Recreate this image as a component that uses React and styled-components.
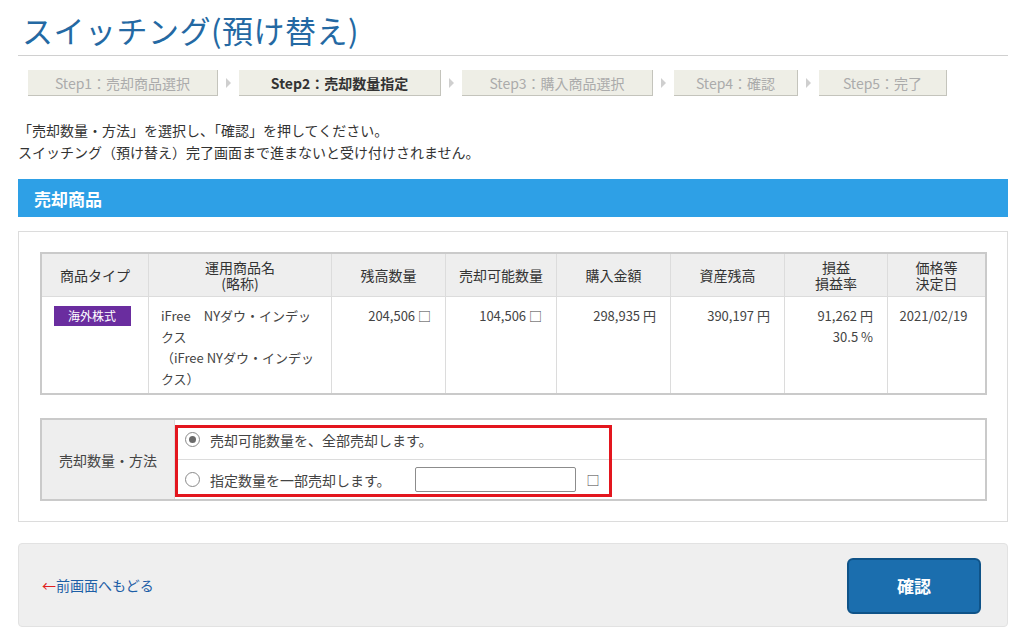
import React from "react";
import styled, { createGlobalStyle } from "styled-components";

const GlobalStyle = createGlobalStyle`
  body {
    margin: 0;
    background: #fff;
    font-family: "Noto Sans CJK JP", "Liberation Sans", sans-serif;
    color: #333;
  }
`;

const Page = styled.div`
  width: 990px;
  padding: 0 24px 0 18px;
`;

const Title = styled.h1`
  margin: 0;
  padding: 8px 0 0 4px;
  height: 47px;
  font-size: 31px;
  font-weight: 400;
  line-height: 44px;
  color: #2469a3;
  border-bottom: 1px solid #d0d0d0;
  letter-spacing: 0.5px;
`;

const Steps = styled.div`
  display: flex;
  align-items: center;
  padding: 14px 0 0 10px;
  height: 26px;
`;

const Step = styled.div`
  box-sizing: border-box;
  width: ${(p) => p.$w}px;
  height: 26px;
  display: flex;
  align-items: center;
  justify-content: center;
  background: #eeeee6;
  border-right: 1px solid #c4c4bc;
  border-bottom: 1px solid #c4c4bc;
  font-size: 14px;
  color: ${(p) => (p.$active ? "#333" : "#ababab")};
  font-weight: ${(p) => (p.$active ? 700 : 400)};
`;

const Arrow = styled.div`
  width: 21px;
  display: flex;
  justify-content: center;
  &::before {
    content: "";
    border-left: 5px solid #cfcfcf;
    border-top: 5px solid transparent;
    border-bottom: 5px solid transparent;
  }
`;

const Lead = styled.p`
  margin: 0;
  padding-top: 23px;
  font-size: 14px;
  line-height: 22px;
  color: #333;
`;

const SectionBar = styled.div`
  margin-top: 16px;
  height: 38px;
  background: #2ea0e6;
  color: #fff;
  font-size: 17px;
  font-weight: 700;
  display: flex;
  align-items: center;
  padding-left: 16px;
`;

const Panel = styled.div`
  margin-top: 14px;
  border: 1px solid #dcdcdc;
  padding: 20px 20px 20px 21px;
  display: flex;
  flex-direction: column;
  gap: 23px;
`;

const Table = styled.table`
  width: 947px;
  border-collapse: collapse;
  border: 2px solid #cacaca;
  font-size: 14px;
`;

const Th = styled.th`
  background: #eeeeee;
  border: 1px solid #dcdcdc;
  font-weight: 400;
  height: 42px;
  padding: 0;
  line-height: 16px;
  color: #333;
  width: ${(p) => p.$w}px;
`;

const Td = styled.td`
  border: 1px solid #dcdcdc;
  vertical-align: top;
  height: 88px;
  padding: 8px 14px 0 ${(p) => (p.$left ? 12 : 8)}px;
  text-align: ${(p) => p.$align || "right"};
  line-height: 21px;
  font-size: 13px;
  color: #444;
`;

const Badge = styled.span`
  display: inline-block;
  width: 77px;
  height: 20px;
  line-height: 20px;
  background: #6a2d9f;
  color: #fff;
  font-size: 12px;
  text-align: center;
  margin-top: 1px;
`;

const Method = styled.table`
  width: 947px;
  border-collapse: collapse;
  border: 2px solid #cacaca;
  font-size: 14px;
`;

const Label = styled.td`
  width: 132px;
  background: #eeeeee;
  border: 1px solid #dcdcdc;
  text-align: center;
  color: #444;
  padding: 0;
`;

const Options = styled.td`
  padding: 0;
  border: 1px solid #dcdcdc;
`;

const OptionsWrap = styled.div`
  position: relative;
`;

const OptionRow = styled.label`
  display: flex;
  align-items: center;
  height: 39px;
  padding-left: 10px;
  gap: 10px;
  color: #444;
  font-size: 14px;
  & + & {
    border-top: 1px solid #dcdcdc;
  }
`;

const Radio = styled.span`
  box-sizing: border-box;
  width: 15px;
  height: 15px;
  border-radius: 50%;
  border: 1px solid #8a8a8a;
  background: #fff;
  display: flex;
  align-items: center;
  justify-content: center;
  &::after {
    content: "";
    width: 7px;
    height: 7px;
    border-radius: 50%;
    background: ${(p) => (p.$checked ? "#6a6a6a" : "transparent")};
  }
`;

const QtyInput = styled.input`
  box-sizing: border-box;
  width: 161px;
  height: 25px;
  margin-left: 14px;
  border: 1px solid #8c8c8c;
  border-radius: 2px;
`;

const Unit = styled.span`
  margin-left: 1px;
  font-size: 13px;
`;

const Highlight = styled.div`
  position: absolute;
  left: 0;
  top: 5px;
  width: 437px;
  height: 72px;
  box-sizing: border-box;
  border: 3px solid #e3161e;
  pointer-events: none;
`;

const Footer = styled.div`
  margin-top: 21px;
  height: 84px;
  box-sizing: border-box;
  background: #efefef;
  border: 1px solid #e2e2e2;
  border-radius: 4px;
  display: flex;
  align-items: center;
  justify-content: space-between;
  padding: 0 26px 0 23px;
`;

const BackLink = styled.a`
  font-size: 14px;
  color: #1d5ea6;
  text-decoration: none;
  span {
    color: #e02020;
  }
`;

const Confirm = styled.button`
  width: 134px;
  height: 56px;
  background: #1b6eae;
  border: 2px solid #0f5388;
  border-radius: 6px;
  color: #fff;
  font-family: inherit;
  font-size: 17px;
  font-weight: 700;
  margin-top: 1px;
`;

const steps = [
  { label: "Step1：売却商品選択", w: 190 },
  { label: "Step2：売却数量指定", w: 202, active: true },
  { label: "Step3：購入商品選択", w: 191 },
  { label: "Step4：確認", w: 124 },
  { label: "Step5：完了", w: 128 },
];

export default function App() {
  return (
    <>
      <GlobalStyle />
      <Page>
        <Title>スイッチング(預け替え)</Title>
        <Steps>
          {steps.map((s, i) => (
            <React.Fragment key={s.label}>
              {i > 0 && <Arrow />}
              <Step $w={s.w} $active={s.active}>
                {s.label}
              </Step>
            </React.Fragment>
          ))}
        </Steps>
        <Lead>
          「売却数量・方法」を選択し、「確認」を押してください。
          <br />
          スイッチング（預け替え）完了画面まで進まないと受け付けされません。
        </Lead>
        <SectionBar>売却商品</SectionBar>
        <Panel>
          <Table>
            <thead>
              <tr>
                <Th $w={106}>商品タイプ</Th>
                <Th $w={182}>
                  運用商品名
                  <br />
                  (略称)
                </Th>
                <Th $w={113}>残高数量</Th>
                <Th $w={110}>売却可能数量</Th>
                <Th $w={113}>購入金額</Th>
                <Th $w={113}>資産残高</Th>
                <Th $w={102}>
                  損益
                  <br />
                  損益率
                </Th>
                <Th>
                  価格等
                  <br />
                  決定日
                </Th>
              </tr>
            </thead>
            <tbody>
              <tr>
                <Td $align="center">
                  <Badge>海外株式</Badge>
                </Td>
                <Td $align="left" $left>
                  iFree　NYダウ・インデックス
                  <br />
                  （iFree NYダウ・インデックス）
                </Td>
                <Td>204,506 □</Td>
                <Td>104,506 □</Td>
                <Td>298,935 円</Td>
                <Td>390,197 円</Td>
                <Td>
                  91,262 円
                  <br />
                  30.5 %
                </Td>
                <Td $align="center">2021/02/19</Td>
              </tr>
            </tbody>
          </Table>
          <Method>
            <tbody>
              <tr>
                <Label>売却数量・方法</Label>
                <Options>
                  <OptionsWrap>
                    <OptionRow>
                      <Radio $checked />
                      売却可能数量を、全部売却します。
                    </OptionRow>
                    <OptionRow>
                      <Radio />
                      指定数量を一部売却します。
                      <QtyInput />
                      <Unit>□</Unit>
                    </OptionRow>
                    <Highlight />
                  </OptionsWrap>
                </Options>
              </tr>
            </tbody>
          </Method>
        </Panel>
        <Footer>
          <BackLink href="#">
            <span>←</span>前画面へもどる
          </BackLink>
          <Confirm>確認</Confirm>
        </Footer>
      </Page>
    </>
  );
}
